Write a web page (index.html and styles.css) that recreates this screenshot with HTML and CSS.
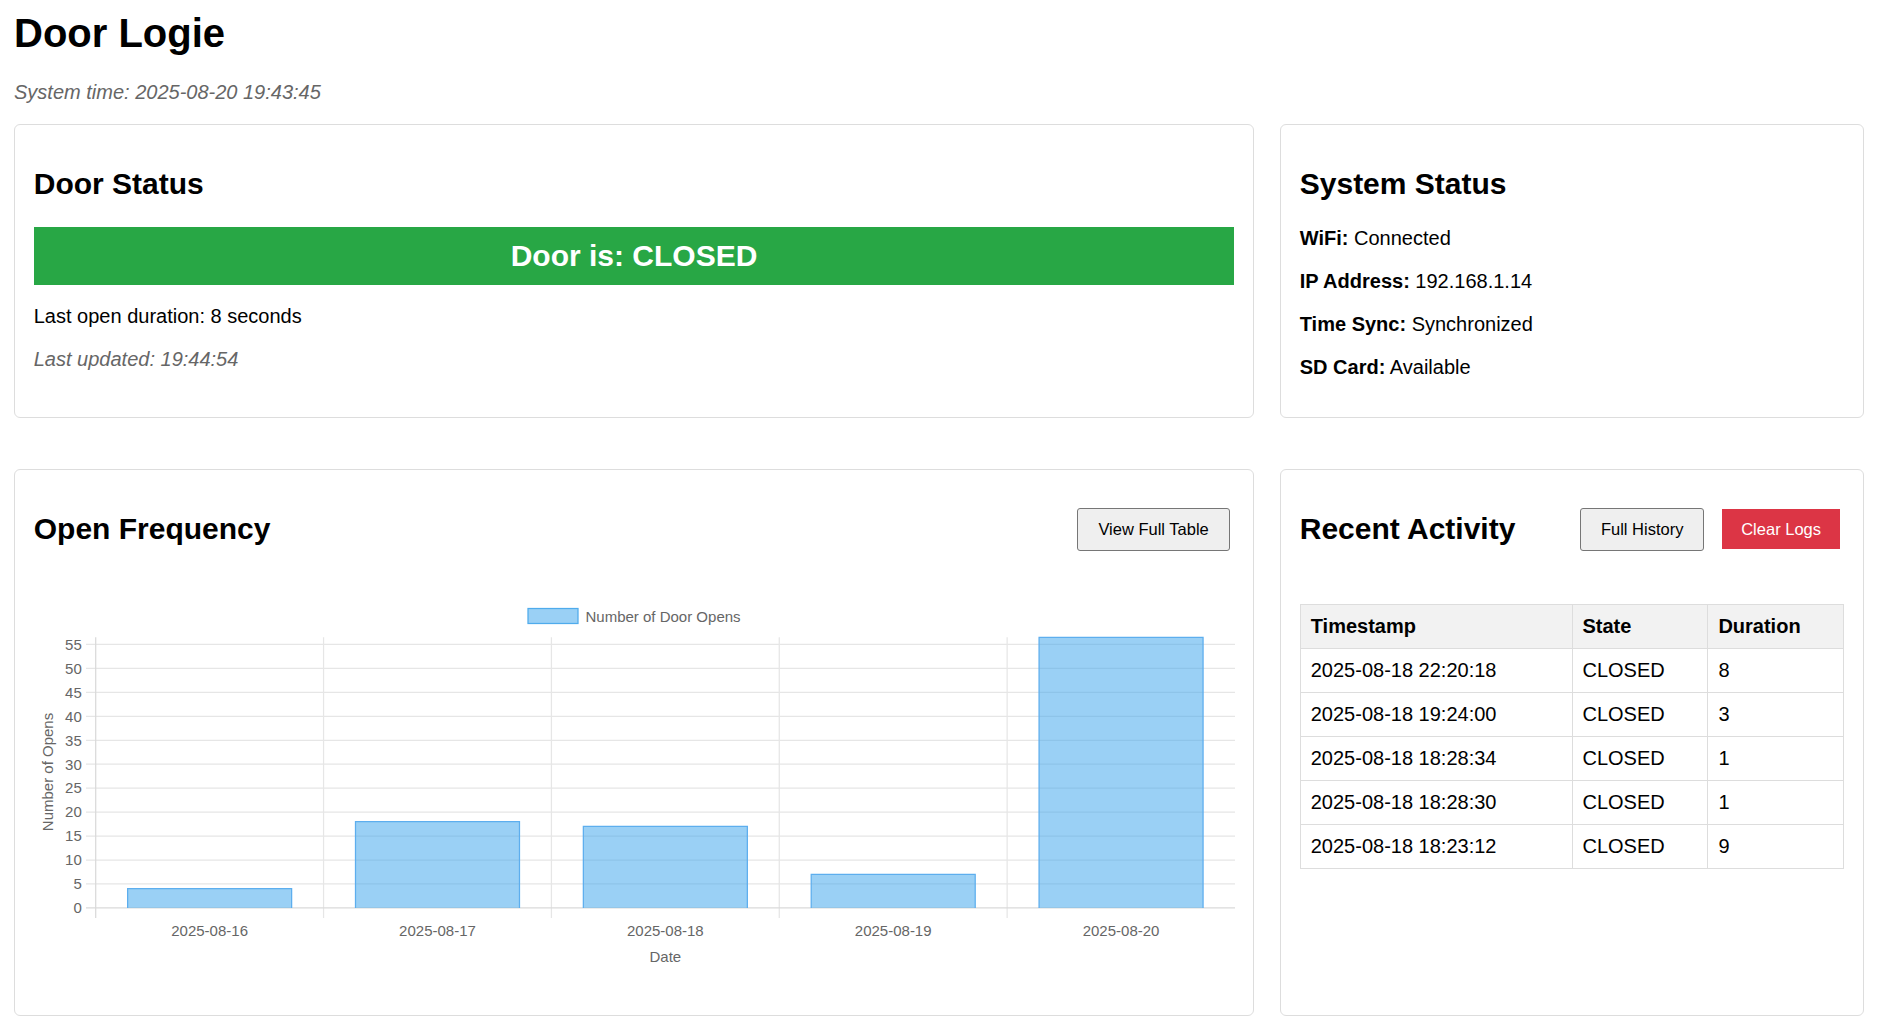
FILE: index.html
```html
<!DOCTYPE html>
<html lang="en">
<head>
<meta charset="utf-8">
<title>Door Logie</title>
<link rel="stylesheet" href="styles.css">
</head>
<body>
<h1 class="title">Door Logie</h1>
<p class="systime">System time: 2025-08-20 19:43:45</p>

<div class="row row-top">
  <section class="card">
    <h2>Door Status</h2>
    <div class="door-state">Door is: CLOSED</div>
    <p>Last open duration: 8 seconds</p>
    <p class="muted">Last updated: 19:44:54</p>
  </section>
  <section class="card">
    <h2>System Status</h2>
    <p><strong>WiFi:</strong> Connected</p>
    <p><strong>IP Address:</strong> 192.168.1.14</p>
    <p><strong>Time Sync:</strong> Synchronized</p>
    <p><strong>SD Card:</strong> Available</p>
  </section>
</div>

<div class="row row-bottom">
  <section class="card">
    <div class="card-head">
      <h2>Open Frequency</h2>
      <div class="actions"><button class="btn">View Full Table</button></div>
    </div>
    <svg class="chart" width="1200" height="399" viewBox="0 0 1200 399">
      <g transform="translate(1 0)">
      <g class="legend">
        <rect class="legend-box" x="493" y="12.5" width="50" height="15"/>
        <text class="lbl" x="550.5" y="25.5">Number of Door Opens</text>
      </g>
      <g class="grid">
        <line x1="51" y1="48.45" x2="1200" y2="48.45"/>
        <line x1="51" y1="72.4" x2="1200" y2="72.4"/>
        <line x1="51" y1="96.35" x2="1200" y2="96.35"/>
        <line x1="51" y1="120.3" x2="1200" y2="120.3"/>
        <line x1="51" y1="144.25" x2="1200" y2="144.25"/>
        <line x1="51" y1="168.2" x2="1200" y2="168.2"/>
        <line x1="51" y1="192.15" x2="1200" y2="192.15"/>
        <line x1="51" y1="216.1" x2="1200" y2="216.1"/>
        <line x1="51" y1="240.05" x2="1200" y2="240.05"/>
        <line x1="51" y1="264" x2="1200" y2="264"/>
        <line x1="51" y1="287.95" x2="1200" y2="287.95"/>
        <line x1="288.56" y1="41.3" x2="288.56" y2="322"/>
        <line x1="516.42" y1="41.3" x2="516.42" y2="322"/>
        <line x1="744.28" y1="41.3" x2="744.28" y2="322"/>
        <line x1="972.14" y1="41.3" x2="972.14" y2="322"/>
      </g>
      <g class="axis">
        <line x1="60.7" y1="41.3" x2="60.7" y2="322"/>
        <line x1="51" y1="311.9" x2="1200" y2="311.9"/>
      </g>
      <g class="bars">
        <rect x="92.63" y="292.74" width="164" height="19.16"/>
        <rect x="320.49" y="225.68" width="164" height="86.22"/>
        <rect x="548.35" y="230.47" width="164" height="81.43"/>
        <rect x="776.21" y="278.37" width="164" height="33.53"/>
        <rect x="1004.07" y="41.3" width="164" height="270.6"/>
      </g>
      <g class="bar-edges">
        <path d="M92.63 311.9V292.74H256.63V311.9"/>
        <path d="M320.49 311.9V225.68H484.49V311.9"/>
        <path d="M548.35 311.9V230.47H712.35V311.9"/>
        <path d="M776.21 311.9V278.37H940.21V311.9"/>
        <path d="M1004.07 311.9V41.3H1168.07V311.9"/>
      </g>
      <g class="yticks lbl">
        <text x="46.8" y="317.2">0</text>
        <text x="46.8" y="293.25">5</text>
        <text x="46.8" y="269.3">10</text>
        <text x="46.8" y="245.35">15</text>
        <text x="46.8" y="221.4">20</text>
        <text x="46.8" y="197.45">25</text>
        <text x="46.8" y="173.5">30</text>
        <text x="46.8" y="149.55">35</text>
        <text x="46.8" y="125.6">40</text>
        <text x="46.8" y="101.65">45</text>
        <text x="46.8" y="77.7">50</text>
        <text x="46.8" y="53.75">55</text>
      </g>
      <g class="xticks lbl">
        <text x="174.63" y="340.1">2025-08-16</text>
        <text x="402.49" y="340.1">2025-08-17</text>
        <text x="630.35" y="340.1">2025-08-18</text>
        <text x="858.21" y="340.1">2025-08-19</text>
        <text x="1086.07" y="340.1">2025-08-20</text>
      </g>
      <text class="lbl axis-title" x="630.35" y="366.1">Date</text>
      <text class="lbl axis-title" transform="translate(18.4 176) rotate(-90)">Number of Opens</text>
      </g>
    </svg>
  </section>
  <section class="card">
    <div class="card-head">
      <h2>Recent Activity</h2>
      <div class="actions">
        <button class="btn">Full History</button>
        <button class="btn btn-danger">Clear Logs</button>
      </div>
    </div>
    <table class="log-table">
      <thead>
        <tr><th class="c-ts">Timestamp</th><th class="c-st">State</th><th class="c-du">Duration</th></tr>
      </thead>
      <tbody>
        <tr><td>2025-08-18 22:20:18</td><td>CLOSED</td><td>8</td></tr>
        <tr><td>2025-08-18 19:24:00</td><td>CLOSED</td><td>3</td></tr>
        <tr><td>2025-08-18 18:28:34</td><td>CLOSED</td><td>1</td></tr>
        <tr><td>2025-08-18 18:28:30</td><td>CLOSED</td><td>1</td></tr>
        <tr><td>2025-08-18 18:23:12</td><td>CLOSED</td><td>9</td></tr>
      </tbody>
    </table>
  </section>
</div>
</body>
</html>
```

FILE: styles.css
```css
html, body {
  margin: 0;
}

body {
  padding: 10px 14px;
  font-family: "Liberation Sans", Arial, sans-serif;
  font-size: 20px;
  color: #000;
  background: #fff;
}

p {
  margin: 20px 0;
  line-height: 23px;
}

.title {
  font-size: 40px;
  line-height: 46px;
  font-weight: bold;
  margin: 0 0 25px;
}

.systime {
  font-style: italic;
  color: #666;
  margin: 0 0 20px;
}

.row {
  display: grid;
  grid-template-columns: minmax(0, 1fr) 584px;
  gap: 26px;
}

.row-bottom {
  margin-top: 51px;
}

.card {
  border: 1px solid #ddd;
  border-radius: 6px;
  padding: 20px 18.75px;
  background: #fff;
}

.row-top .card {
  padding-bottom: 18.5px;
}

.card h2 {
  font-size: 30px;
  line-height: 34.5px;
  font-weight: bold;
  margin: 22px 0 25px;
}

.door-state {
  background: #28a745;
  color: #fff;
  font-size: 30px;
  line-height: 34.5px;
  font-weight: bold;
  text-align: center;
  padding: 12px;
  margin: 0 0 20px;
}

.muted {
  font-style: italic;
  color: #666;
}

.card-head {
  display: flex;
  align-items: center;
  justify-content: space-between;
  height: 34.5px;
  margin: 22px 0 0;
}

.card .card-head h2 {
  margin: 0;
}

.actions {
  display: flex;
  align-items: center;
  gap: 18px;
  margin-right: 4.5px;
}

.btn {
  font-family: "Liberation Sans", Arial, sans-serif;
  font-size: 16.5px;
  line-height: 19px;
  padding: 11px 20px;
  border: 1px solid #767676;
  border-radius: 3px;
  background: #efefef;
  color: #000;
}

.btn-danger {
  background: #dc3545;
  color: #fff;
  border: none;
  border-radius: 0;
  padding: 10.3px 18.75px;
}

.chart {
  display: block;
  margin-top: 49px;
  overflow: visible;
  font-family: "Liberation Sans", Arial, sans-serif;
}

.lbl {
  font-size: 15px;
  fill: #666;
}

.legend-box {
  fill: #9ad0f5;
  stroke: #4fabec;
  stroke-width: 1.25;
}

.grid line {
  stroke: #e6e6e6;
  stroke-width: 1.25;
}

.axis line {
  stroke: #dadada;
  stroke-width: 1.25;
}

.bars rect {
  fill: rgba(54, 162, 235, 0.5);
}

.bar-edges path {
  fill: none;
  stroke: #5daeee;
  stroke-width: 1.25;
}

.yticks text {
  text-anchor: end;
}

.xticks text,
.axis-title {
  text-anchor: middle;
}

.log-table {
  width: 100%;
  border-collapse: collapse;
  margin-top: 57px;
}

.log-table th,
.log-table td {
  border: 1px solid #ddd;
  padding: 10px;
  text-align: left;
  line-height: 23px;
}

.log-table th {
  background: #f2f2f2;
  font-weight: bold;
}

.c-ts {
  width: 50%;
}

.c-st,
.c-du {
  width: 25%;
}
```
